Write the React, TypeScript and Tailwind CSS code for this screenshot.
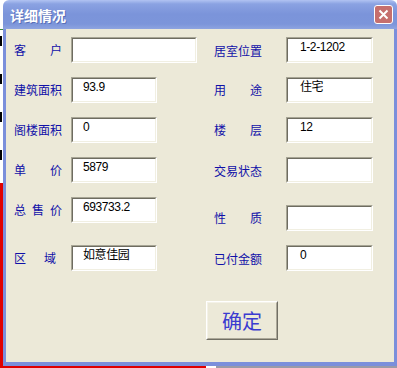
const cjk = "font-['Noto_Sans_CJK_SC',sans-serif]";

function Label({ chars, width = 48 }: { chars: string[]; width?: number }) {
  return (
    <div className="w-[57px] shrink-0 flex">
      <div
        className={`flex justify-between text-[12px] leading-[14px] text-[#1010a8] ${cjk}`}
        style={{ width }}
      >
        {chars.map((c, i) => (
          <span key={i}>{c}</span>
        ))}
      </div>
    </div>
  );
}

function Field({ value = "", className = "" }: { value?: string; className?: string }) {
  return (
    <div className={`h-[26px] border border-t-[#a7a595] border-l-[#a7a595] border-b-white border-r-white ${className}`}>
      <div className="h-full border border-t-[#6e6c60] border-l-[#6e6c60] border-b-[#f1efe2] border-r-[#f1efe2] bg-white pt-[1px] text-[12px] leading-[14px] text-black font-['Liberation_Sans','Noto_Sans_CJK_SC',sans-serif] tracking-[-0.4px]">
        {value}
      </div>
    </div>
  );
}

function Row({ children, gap = 14 }: { children: React.ReactNode; gap?: number }) {
  return (
    <div className="flex items-center" style={{ marginBottom: gap }}>
      {children}
    </div>
  );
}

export default function App() {
  return (
    <div className="w-[397px] h-[368px] flex flex-col overflow-hidden bg-white">
      <div className="flex flex-1">
        {/* what shows of the page behind */}
        <div className="w-[3px] flex flex-col overflow-hidden">
          <div className="h-[30px] border-b border-[#3a8a3a]"></div>
          <div className="h-[153px] pt-[6px] flex flex-col gap-[28px]">
            <div className="w-[2px] h-[10px] bg-black"></div>
            <div className="w-[2px] h-[10px] bg-black"></div>
            <div className="w-[2px] h-[10px] bg-black"></div>
            <div className="w-[2px] h-[10px] bg-black"></div>
          </div>
          <div className="flex-1 bg-[#e00000]"></div>
        </div>

        {/* dialog */}
        <div className="flex-1 flex flex-col">
          <div className="h-[29px] rounded-tl-[6px] rounded-tr-[6px] flex items-center pl-[7px] pr-[4px] bg-[linear-gradient(to_bottom,#b1c3f2_0px,#8aa2e2_4px,#7b94da_14px,#7c95da_24px,#8ea4e0_29px)]">
            <span
              className={`text-white text-[14px] font-bold leading-[16px] [text-shadow:1px_1px_#5a70b8] ${cjk}`}
            >
              详细情况
            </span>
            <div className="ml-auto w-[19px] h-[19px] rounded-[3px] border border-white bg-[#c66f6d] flex items-center justify-center">
              <svg width="11" height="11" viewBox="0 0 11 11">
                <path d="M1.5 1.5 L9.5 9.5 M9.5 1.5 L1.5 9.5" stroke="white" strokeWidth="2" />
              </svg>
            </div>
          </div>

          <div className="flex-1 border-l-[3px] border-r-[3px] border-b-[4px] border-[#7b8fdb] bg-[#ece9d8] pt-[8px]">
            <div className="flex">
              <div className="ml-[8px] w-[183px] flex flex-col">
                <Row>
                  <Label chars={["客", "户"]} />
                  <Field className="w-[126px]" />
                </Row>
                <Row>
                  <Label chars={["建", "筑", "面", "积"]} />
                  <Field value="93.9" className="w-[86px] [&>div]:pl-[10px]" />
                </Row>
                <Row>
                  <Label chars={["阁", "楼", "面", "积"]} />
                  <Field value="0" className="w-[86px] [&>div]:pl-[10px]" />
                </Row>
                <Row>
                  <Label chars={["单", "价"]} />
                  <Field value="5879" className="w-[86px] [&>div]:pl-[10px]" />
                </Row>
                <Row gap={22}>
                  <Label chars={["总", "售", "价"]} />
                  <Field value="693733.2" className="w-[86px] [&>div]:pl-[10px]" />
                </Row>
                <Row gap={0}>
                  <Label chars={["区", "域"]} width={42} />
                  <Field value="如意佳园" className="w-[86px] [&>div]:pl-[10px]" />
                </Row>
              </div>

              <div className="ml-[17px] flex flex-col">
                <Row>
                  <div className="w-[72px] shrink-0">
                    <span className={`text-[12px] leading-[14px] text-[#1010a8] ${cjk}`}>居室位置</span>
                  </div>
                  <Field value="1-2-1202" className="w-[87px] [&>div]:pl-[12px]" />
                </Row>
                <Row>
                  <div className="w-[72px] shrink-0">
                    <Label chars={["用", "途"]} />
                  </div>
                  <Field value="住宅" className="w-[87px] [&>div]:pl-[12px]" />
                </Row>
                <Row>
                  <div className="w-[72px] shrink-0">
                    <Label chars={["楼", "层"]} />
                  </div>
                  <Field value="12" className="w-[87px] [&>div]:pl-[12px]" />
                </Row>
                <Row gap={22}>
                  <div className="w-[72px] shrink-0">
                    <span className={`text-[12px] leading-[14px] text-[#1010a8] ${cjk}`}>交易状态</span>
                  </div>
                  <Field className="w-[87px]" />
                </Row>
                <Row>
                  <div className="w-[72px] shrink-0">
                    <Label chars={["性", "质"]} />
                  </div>
                  <Field className="w-[87px]" />
                </Row>
                <Row gap={0}>
                  <div className="w-[72px] shrink-0">
                    <span className={`text-[12px] leading-[14px] text-[#1010a8] ${cjk}`}>已付金额</span>
                  </div>
                  <Field value="0" className="w-[87px] [&>div]:pl-[12px]" />
                </Row>
              </div>
            </div>

            <div className="mt-[30px] ml-[200px] w-[72px] h-[39px] border border-t-white border-l-white border-b-[#716f64] border-r-[#716f64]">
              <div className="h-full border border-t-[#f4f2e8] border-l-[#f4f2e8] border-b-[#aca899] border-r-[#aca899] flex items-center justify-center">
                <span className={`text-[20px] leading-[22px] text-[#3b3bd0] ${cjk}`}>确定</span>
              </div>
            </div>
          </div>
        </div>
      </div>
      <div className="h-[2px] flex">
        <div className="w-[206px] bg-[#e00000]"></div>
        <div className="w-[10px] bg-white"></div>
        <div className="flex-1 bg-[#9a9aa8]"></div>
      </div>
    </div>
  );
}
